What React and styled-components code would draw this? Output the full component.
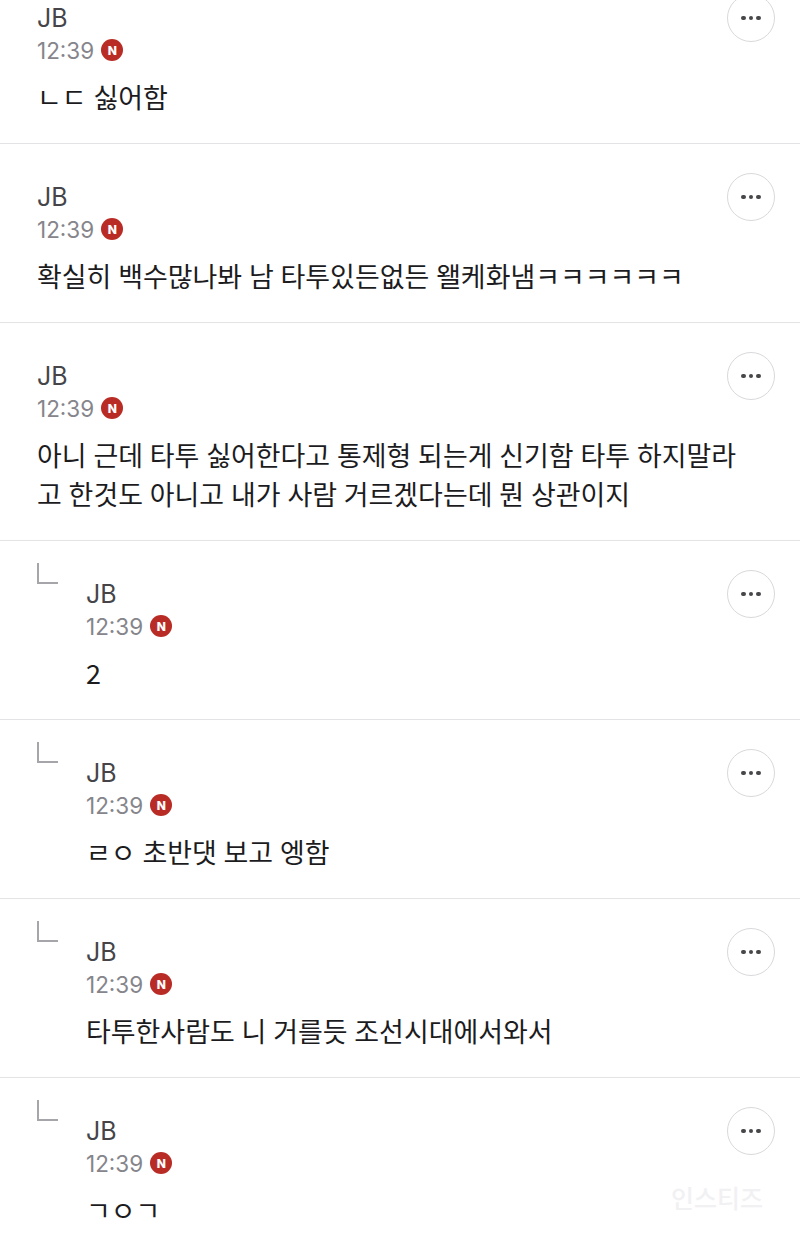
import React from "react";
import styled, { createGlobalStyle } from "styled-components";

const GlobalStyle = createGlobalStyle`
  html, body {
    margin: 0;
    padding: 0;
    background: #fff;
  }
  body {
    font-family: Inter, "Noto Sans CJK KR", sans-serif;
  }
`;

const Page = styled.div`
  position: relative;
  width: 800px;
  height: 1237px;
  overflow: hidden;
  background: #fff;
`;

const List = styled.ul`
  list-style: none;
  margin: -35px 0 0;
  padding: 0;
`;

const Row = styled.li`
  display: flex;
  justify-content: space-between;
  align-items: flex-start;
  box-sizing: border-box;
  padding: 29px 25px 27px 37px;
  border-bottom: 1px solid #e3e3e5;
`;

const Body = styled.div`
  display: flex;
  flex: 1;
  min-width: 0;
`;

const ReplyMark = styled.span`
  flex: none;
  width: 21px;
  height: 21px;
  margin: -7px 28px 0 0;
  box-sizing: border-box;
  border-left: 2px solid #a5a5aa;
  border-bottom: 2px solid #a5a5aa;
`;

const Content = styled.div`
  flex: 1;
  min-width: 0;
`;

const Name = styled.div`
  font-size: 25px;
  line-height: 30px;
  margin-top: 9px;
  color: #454549;
`;

const Meta = styled.div`
  display: flex;
  align-items: center;
  gap: 7px;
  margin-top: 3px;
  height: 28px;
  font-size: 22.5px;
  color: #85858b;
`;

const NewBadge = styled.span`
  display: flex;
  align-items: center;
  justify-content: center;
  width: 22px;
  height: 22px;
  border-radius: 50%;
  background: #b92c25;
  color: #fff;
  font-size: 12px;
  font-weight: 800;
`;

const Message = styled.p`
  margin: 13px 0 0;
  width: 710px;
  font-family: "Noto Sans CJK KR", sans-serif;
  font-size: 26.95px;
  line-height: 39px;
  word-spacing: 0.8px;
  color: #1c1c1e;
`;

const MoreButton = styled.button`
  flex: none;
  display: flex;
  align-items: center;
  justify-content: center;
  gap: 3px;
  width: 48px;
  height: 48px;
  padding: 0;
  margin-left: -48px;
  background: #fff;
  border: 1.5px solid #d9d9dc;
  border-radius: 50%;
`;

const Dot = styled.span`
  width: 4.5px;
  height: 4.5px;
  border-radius: 50%;
  background: #47474b;
`;

const Watermark = styled.div`
  position: absolute;
  right: 37px;
  top: 1179px;
  font-family: "Noto Sans CJK KR", sans-serif;
  font-size: 25px;
  font-weight: 500;
  color: #f1f1f3;
`;

const comments = [
  { id: 1, text: "ㄴㄷ 싫어함" },
  { id: 2, text: "확실히 백수많나봐 남 타투있든없든 왤케화냄ㅋㅋㅋㅋㅋㅋ" },
  {
    id: 3,
    text: "아니 근데 타투 싫어한다고 통제형 되는게 신기함 타투 하지말라고 한것도 아니고 내가 사람 거르겠다는데 뭔 상관이지"
  },
  { id: 4, reply: true, text: "2" },
  { id: 5, reply: true, text: "ㄹㅇ 초반댓 보고 엥함" },
  { id: 6, reply: true, text: "타투한사람도 니 거를듯 조선시대에서와서" },
  { id: 7, reply: true, text: "ㄱㅇㄱ" }
];

const App = () => (
  <Page>
    <GlobalStyle />
    <List>
      {comments.map(({ id, reply, text }) => (
        <Row key={id}>
          <Body>
            {reply && <ReplyMark />}
            <Content>
              <Name>JB</Name>
              <Meta>
                12:39
                <NewBadge>N</NewBadge>
              </Meta>
              <Message>{text}</Message>
            </Content>
          </Body>
          <MoreButton aria-label="더보기">
            <Dot />
            <Dot />
            <Dot />
          </MoreButton>
        </Row>
      ))}
    </List>
    <Watermark>인스티즈</Watermark>
  </Page>
);

export default App;
